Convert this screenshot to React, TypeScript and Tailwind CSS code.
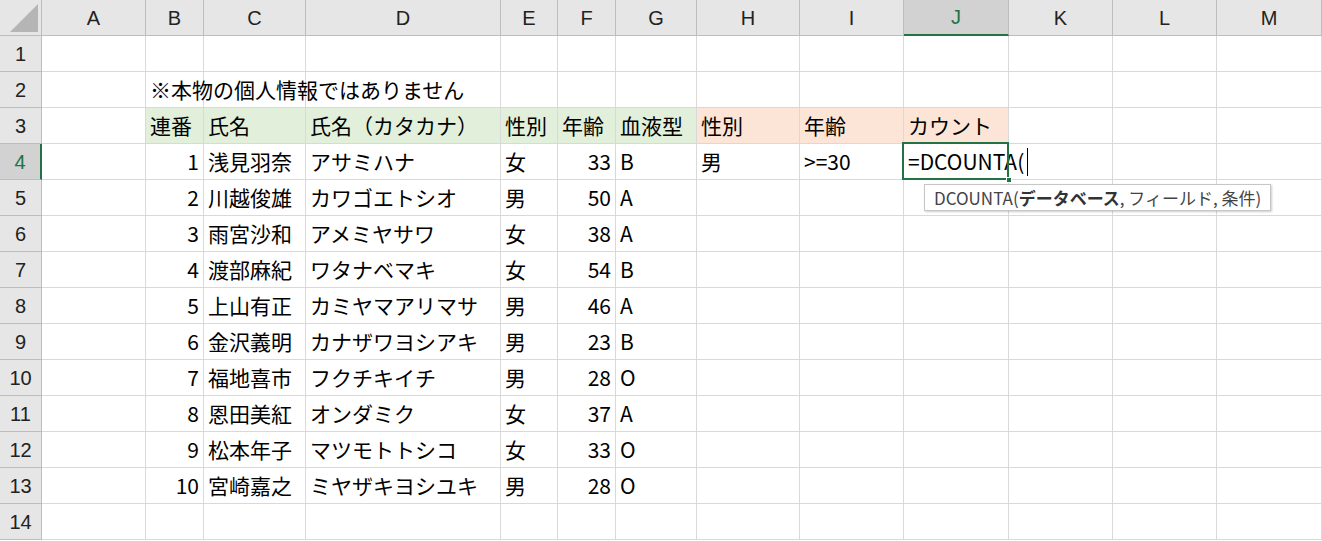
import React from "react";

const cols = ["A","B","C","D","E","F","G","H","I","J","K","L","M"];
const data: [number,string,string,string,number,string][] = [
  [1,"浅見羽奈","アサミハナ","女",33,"B"],
  [2,"川越俊雄","カワゴエトシオ","男",50,"A"],
  [3,"雨宮沙和","アメミヤサワ","女",38,"A"],
  [4,"渡部麻紀","ワタナベマキ","女",54,"B"],
  [5,"上山有正","カミヤマアリマサ","男",46,"A"],
  [6,"金沢義明","カナザワヨシアキ","男",23,"B"],
  [7,"福地喜市","フクチキイチ","男",28,"O"],
  [8,"恩田美紅","オンダミク","女",37,"A"],
  [9,"松本年子","マツモトトシコ","女",33,"O"],
  [10,"宮崎嘉之","ミヤザキヨシユキ","男",28,"O"],
];

type C = { t?: string; r?: boolean; bg?: string; sel?: boolean; overflow?: boolean };

function Cell({ c }: { c: C }) {
  return (
    <div className={`relative h-[36px] border-r border-b border-[#d9d9d9] flex items-center px-[4px] whitespace-nowrap ${c.overflow ? "overflow-visible z-10" : "overflow-hidden"} ${c.r ? "justify-end" : ""} ${c.bg ?? ""}`}>
      <span className="flex items-center">{c.t}{c.sel && <span className="inline-block w-[1px] h-[28px] bg-black ml-[3px]" />}</span>
      {c.sel && (
        <>
          <div className="absolute -left-[2px] -top-[2px] right-[-1px] bottom-[-1px] border-2 border-[#217346] pointer-events-none" />
          <div className="absolute right-[-4px] bottom-[-4px] w-[6px] h-[6px] bg-[#217346] border border-white" />
        </>
      )}
    </div>
  );
}

export default function App() {
  const rows: C[][] = [];
  for (let i = 1; i <= 14; i++) rows.push(cols.map(() => ({})));
  rows[1][1] = { t: "※本物の個人情報ではありません", overflow: true };
  const g = "bg-[#e2efda]", o = "bg-[#fce4d6]";
  ["連番","氏名","氏名（カタカナ）","性別","年齢","血液型"].forEach((t, i) => (rows[2][i + 1] = { t, bg: g }));
  ["性別","年齢","カウント"].forEach((t, i) => (rows[2][i + 7] = { t, bg: o }));
  data.forEach((d, i) => {
    const r = rows[3 + i];
    r[1] = { t: String(d[0]), r: true };
    r[2] = { t: d[1] };
    r[3] = { t: d[2] };
    r[4] = { t: d[3] };
    r[5] = { t: String(d[4]), r: true };
    r[6] = { t: d[5] };
  });
  rows[3][7] = { t: "男" };
  rows[3][8] = { t: ">=30" };
  rows[3][9] = { t: "=DCOUNTA(", sel: true, overflow: true };

  return (
    <div className="relative w-[1322px] h-[541px] bg-white overflow-hidden text-[21px] text-black" style={{ fontFamily: '"Noto Sans CJK JP", "Liberation Sans", sans-serif' }}>
      <div className="grid grid-cols-[42px_104px_58px_102px_195px_57px_58px_81px_103px_104px_105px_104px_104px_105px]">
        <div className="h-[36px] bg-[#e6e6e6] border-r border-b border-[#bdbdbd] relative">
          <div className="absolute right-[3px] bottom-[3px] w-0 h-0 border-l-[28px] border-l-transparent border-b-[28px] border-b-[#b5b5b5]" />
        </div>
        {cols.map((c) => (
          <div key={c} className={`h-[36px] flex items-center justify-center border-r border-b ${c === "J" ? "bg-[#d2d2d2] border-b-2 border-b-[#217346] border-r-[#bdbdbd] text-[#217346]" : "bg-[#e6e6e6] border-[#bdbdbd] text-[#222]"}`} style={{ fontFamily: '"Liberation Sans", sans-serif', fontSize: 20 }}>{c}</div>
        ))}
        {rows.map((r, i) => (
          <React.Fragment key={i}>
            <div className={`h-[36px] flex items-center justify-center border-b ${i === 3 ? "bg-[#d2d2d2] border-r-2 border-r-[#217346] border-b-[#bdbdbd] text-[#217346]" : "bg-[#e6e6e6] border-r border-[#bdbdbd] text-[#222]"}`} style={{ fontFamily: '"Liberation Sans", sans-serif', fontSize: 20 }}>{i + 1}</div>
            {r.map((c, j) => <Cell key={j} c={c} />)}
          </React.Fragment>
        ))}
      </div>
      <div className="absolute left-[924px] top-[184px] h-[27px] px-[9px] flex items-center bg-white border border-[#c6c6c6] shadow-[1px_1px_2px_rgba(0,0,0,0.2)] text-[17px] text-[#444] whitespace-nowrap">
        DCOUNTA(<b className="text-[#333]">データベース</b>, フィールド, 条件)
      </div>
    </div>
  );
}
